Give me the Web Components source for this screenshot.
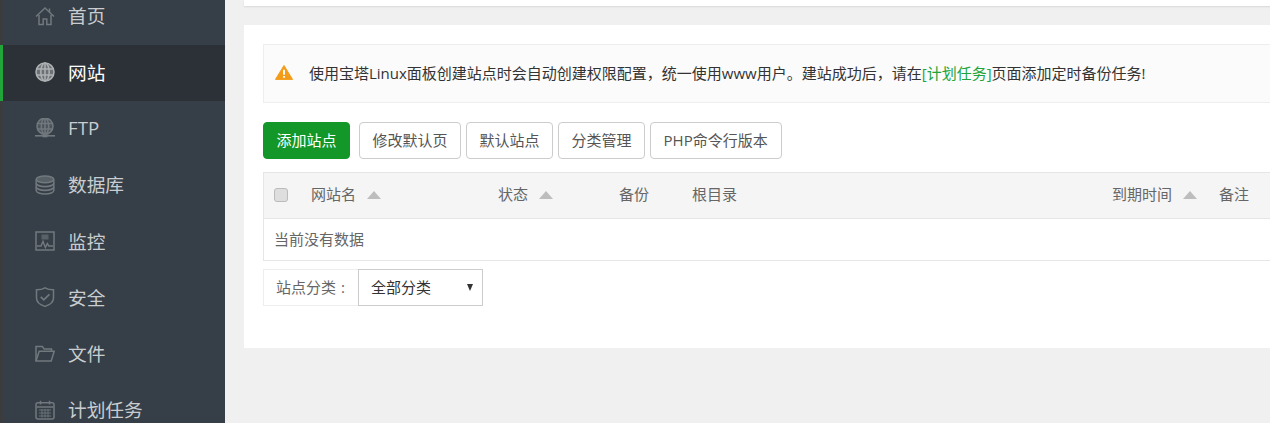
<!DOCTYPE html>
<html lang="zh-CN">
<head>
<meta charset="utf-8">
<title>网站</title>
<style>
  html, body { margin: 0; height: 423px; overflow: hidden; background: #f0f0f0; }
  body { font: 15px "Open Sans", "Noto Sans CJK SC", sans-serif; color: #555; }
</style>
</head>
<body>
<bt-app>
  <bt-sidebar slot="side">
    <bt-nav-item icon="home">首页</bt-nav-item>
    <bt-nav-item icon="globe" active>网站</bt-nav-item>
    <bt-nav-item icon="ftp">FTP</bt-nav-item>
    <bt-nav-item icon="db">数据库</bt-nav-item>
    <bt-nav-item icon="monitor">监控</bt-nav-item>
    <bt-nav-item icon="shield">安全</bt-nav-item>
    <bt-nav-item icon="folder">文件</bt-nav-item>
    <bt-nav-item icon="calendar">计划任务</bt-nav-item>
  </bt-sidebar>
  <bt-card slot="top" class="top"></bt-card>
  <bt-card slot="body">
    <bt-notice>使用宝塔Linux面板创建站点时会自动创建权限配置，统一使用www用户。建站成功后，请在<a style="color:#20a53a">[计划任务]</a>页面添加定时备份任务!</bt-notice>
    <bt-toolbar>
      <bt-button primary>添加站点</bt-button>
      <bt-button>修改默认页</bt-button>
      <bt-button>默认站点</bt-button>
      <bt-button>分类管理</bt-button>
      <bt-button style="padding-right:13.5px">PHP命令行版本</bt-button>
    </bt-toolbar>
    <bt-site-table></bt-site-table>
    <bt-filter label="站点分类" value="全部分类"></bt-filter>
  </bt-card>
</bt-app>

<script>
// icon strokes, all on a 20x20 box
const ICONS = {
  home: `<path d="M1 10.500 10 2l9 8.500"/><path d="M14.500 2.500v3.500"/><path d="M4 9v9.500h4.200v-5.500h3.600v5.500H16V9"/>`,
  globe: `<circle cx="10" cy="10" r="9" fill="currentColor" fill-opacity=".5"/><ellipse cx="10" cy="10" rx="4.200" ry="9"/><path d="M10 1v18M1.500 7h17M1.500 13h17"/>`,
  ftp: `<circle cx="10" cy="8.200" r="8" fill="currentColor" fill-opacity=".4"/><ellipse cx="10" cy="8.200" rx="3.700" ry="8"/><path d="M10 .2v16M2.500 5.500h15M2.500 11h15"/><path d="M0 17.800h20" stroke-width="1.600"/><path d="M7.500 17.800h5" stroke-width="3"/>`,
  db: `<ellipse cx="10" cy="4.400" rx="8.800" ry="3.400" fill="currentColor" fill-opacity=".6"/><path d="M1.200 4.400v11.200c0 1.900 3.900 3.400 8.800 3.400s8.800-1.500 8.800-3.400V4.400"/><path d="M1.200 8.200c0 1.900 3.900 3.400 8.800 3.400s8.800-1.500 8.800-3.400M1.200 12c0 1.900 3.900 3.400 8.800 3.400s8.800-1.500 8.800-3.400" stroke-width="1.700"/>`,
  monitor: `<rect x="1" y="1" width="18" height="18"/><path d="M6.500 3.500h7v5h-7z" fill="currentColor" fill-opacity=".6" stroke="none"/><path d="M2 15h4l2-4.500 2.400 6 2-4 1.400 2.500H18"/>`,
  shield: `<path d="M10 .8c2.600 1.600 5 2 8.500 2v8.200c0 4-3.600 6.900-8.500 8.400C5.100 17.900 1.500 15 1.500 11V2.800C5 2.800 7.400 2.400 10 .8z"/><path d="m5.800 9.800 3 3 5.600-5.400" stroke-width="1.800"/>`,
  folder: `<path d="M1 17V2.500h6.300l1.800 2.400h7.400v2.400"/><path d="M1 17 4.200 7.300h15l-3 9.700z"/>`,
  calendar: `<rect x="1" y="2.800" width="18" height="16.200" rx="2"/><path d="M5.500.8v3.600M14.500.8v3.600M1.500 7h17"/><path d="M4 10h12M4 13h12M4 16h12M7 9v8.500M10 9v8.500M13 9v8.500" stroke-width=".9"/>`
};

// small helper so each component just declares its css + markup
class Base extends HTMLElement
{
  constructor()
  {
    super();
    this.root = this.attachShadow({ mode: "open" });
  }
  connectedCallback()
  {
    this.root.innerHTML = `<style>${this.css()}</style>${this.html()}`;
  }
  css() { return ":host{display:block}"; }
  html() { return "<slot></slot>"; }
}

class BtApp extends Base
{
  css()
  {
    return `
      :host { display: flex; width: 1270px; height: 423px; overflow: hidden; }
      .side { flex: 0 0 225px; height: 423px; overflow: hidden; }
      .main { flex: 1 1 0; min-width: 0; overflow: hidden; padding-left: 19px;
              display: flex; flex-direction: column; gap: 19px; }
    `;
  }
  html()
  {
    return `
      <div class="side"><slot name="side"></slot></div>
      <div class="main"><slot name="top"></slot><slot name="body"></slot></div>
    `;
  }
}

class BtSidebar extends Base
{
  css()
  {
    return `
      :host { display: block; height: 423px; overflow: hidden;
              background: linear-gradient(90deg, #3b3c3d 3px, #363f47 3px); }
      .list { margin-top: -11.300px; }
    `;
  }
  html() { return `<div class="list"><slot></slot></div>`; }
}

class BtNavItem extends Base
{
  css()
  {
    return `
      :host { display: flex; align-items: center; height: 56.300px;
              padding-left: 34.500px; gap: 13.500px; color: #c9cdd0; font-size: 18.700px; }
      :host([active]) { background: #2c3138; color: #fff; box-shadow: inset 3px 0 0 #20a53a; }
      svg { width: 20px; height: 20px; flex: none; fill: none; stroke: #71787e; stroke-width: 1.500;
            color: #71787e; margin-bottom: 2px; }
      :host([active]) svg { stroke: #adb1b4; color: #adb1b4; }
      span { margin-bottom: 4px; }
    `;
  }
  html()
  {
    const icon = ICONS[this.getAttribute("icon")];
    return `<svg viewBox="0 0 20 20">${icon}</svg><span><slot></slot></span>`;
  }
}

class BtCard extends Base
{
  css()
  {
    return `
      :host { display: block; width: 1060px; height: 323px; background: #fff; padding: 19px; box-sizing: border-box; }
      :host(.top) { height: 6px; padding: 0; box-shadow: 0 1px 2px rgba(0,0,0,.1); }
    `;
  }
}

class BtNotice extends Base
{
  css()
  {
    return `
      :host { display: flex; align-items: center; height: 59px; box-sizing: border-box; padding: 0 0 3px 11px; gap: 15px;
              background: #fbfbfb; border: 1px solid #eee; color: #333; white-space: nowrap; margin-bottom: 19px; }
      svg { width: 18px; height: 15px; flex: none; margin: 0 1px 0 0; }
    `;
  }
  html()
  {
    return `
      <svg viewBox="0 0 19 16"><path d="M9.500.500 18.700 15.500H.300z" fill="#f39c19" stroke="#f39c19" stroke-linejoin="round"/><path d="M8.500 5h2v5.500h-2zM8.500 11.700h2v2h-2z" fill="#fff"/></svg>
      <span><slot></slot></span>
    `;
  }
}

class BtToolbar extends Base
{
  css()
  {
    return `
      :host { display: flex; gap: 5px; margin-bottom: 13px; }
      ::slotted([primary]) { margin-right: 4px; }
    `;
  }
}

class BtButton extends Base
{
  css()
  {
    return `
      :host { display: flex; align-items: center; height: 37px; box-sizing: border-box; padding: 0 12.500px 2px;
              border: 1px solid #ccc; border-radius: 4px; background: #fff; color: #555; white-space: nowrap; }
      :host([primary]) { background: #129728; border-color: #129728; color: #fff; }
    `;
  }
}

class BtSiteTable extends Base
{
  css()
  {
    return `
      :host { display: block; border: 1px solid #e6e6e6; border-right: 0; color: #666; margin-bottom: 8px; }
      .head { display: grid; grid-template-columns: 37px 187px 121px 73px 420px 107px 1fr; height: 46px;
              box-sizing: border-box; padding-bottom: 2px;
              background: #f5f5f5; border-bottom: 1px solid #e6e6e6; align-items: center; }
      .head > div { padding-left: 10px; display: flex; align-items: center; }
      .head span:not(.sort) { margin-bottom: 2px; }
      .sort { width: 0; height: 0; margin-left: 11px; border: 7.500px solid transparent; border-top: 0;
              border-bottom: 8px solid #bdbdbd; }
      input { appearance: none; width: 14px; height: 14px; margin: 0; box-sizing: border-box;
              background: #dedede; border: 1px solid #bbb; border-radius: 3px; }
      .row { height: 41px; box-sizing: border-box; padding: 0 0 2px 10px; display: flex; align-items: center; }
    `;
  }
  html()
  {
    return `
      <div class="head">
        <div><input type="checkbox"></div>
        <div><span>网站名</span><span class="sort"></span></div>
        <div><span>状态</span><span class="sort"></span></div>
        <div><span>备份</span></div>
        <div><span>根目录</span></div>
        <div><span>到期时间</span><span class="sort"></span></div>
        <div><span>备注</span></div>
      </div>
      <div class="row">当前没有数据</div>
    `;
  }
}

class BtFilter extends Base
{
  css()
  {
    return `
      :host { display: flex; height: 37px; width: 220px; }
      .label { flex: 0 0 95px; box-sizing: border-box; border: 1px solid #eee; border-right: 0; color: #666;
               display: flex; align-items: center; padding: 0 0 2px 12px; }
      .label span { margin-right: 5px; }
      .select { flex: 0 0 125px; box-sizing: border-box; border: 1px solid #ccc; color: #333;
                display: flex; align-items: center; justify-content: space-between; padding: 0 9px 3px 12px; }
      .caret { width: 0; height: 0; border: 3.500px solid transparent; border-bottom: 0;
               border-top: 7px solid #333; margin-top: 3px; }
    `;
  }
  html()
  {
    return `
      <div class="label"><span>${this.getAttribute("label")}</span>:</div>
      <div class="select">${this.getAttribute("value")}<span class="caret"></span></div>
    `;
  }
}

customElements.define("bt-app", BtApp);
customElements.define("bt-sidebar", BtSidebar);
customElements.define("bt-nav-item", BtNavItem);
customElements.define("bt-card", BtCard);
customElements.define("bt-notice", BtNotice);
customElements.define("bt-toolbar", BtToolbar);
customElements.define("bt-button", BtButton);
customElements.define("bt-site-table", BtSiteTable);
customElements.define("bt-filter", BtFilter);
</script>
</body>
</html>
